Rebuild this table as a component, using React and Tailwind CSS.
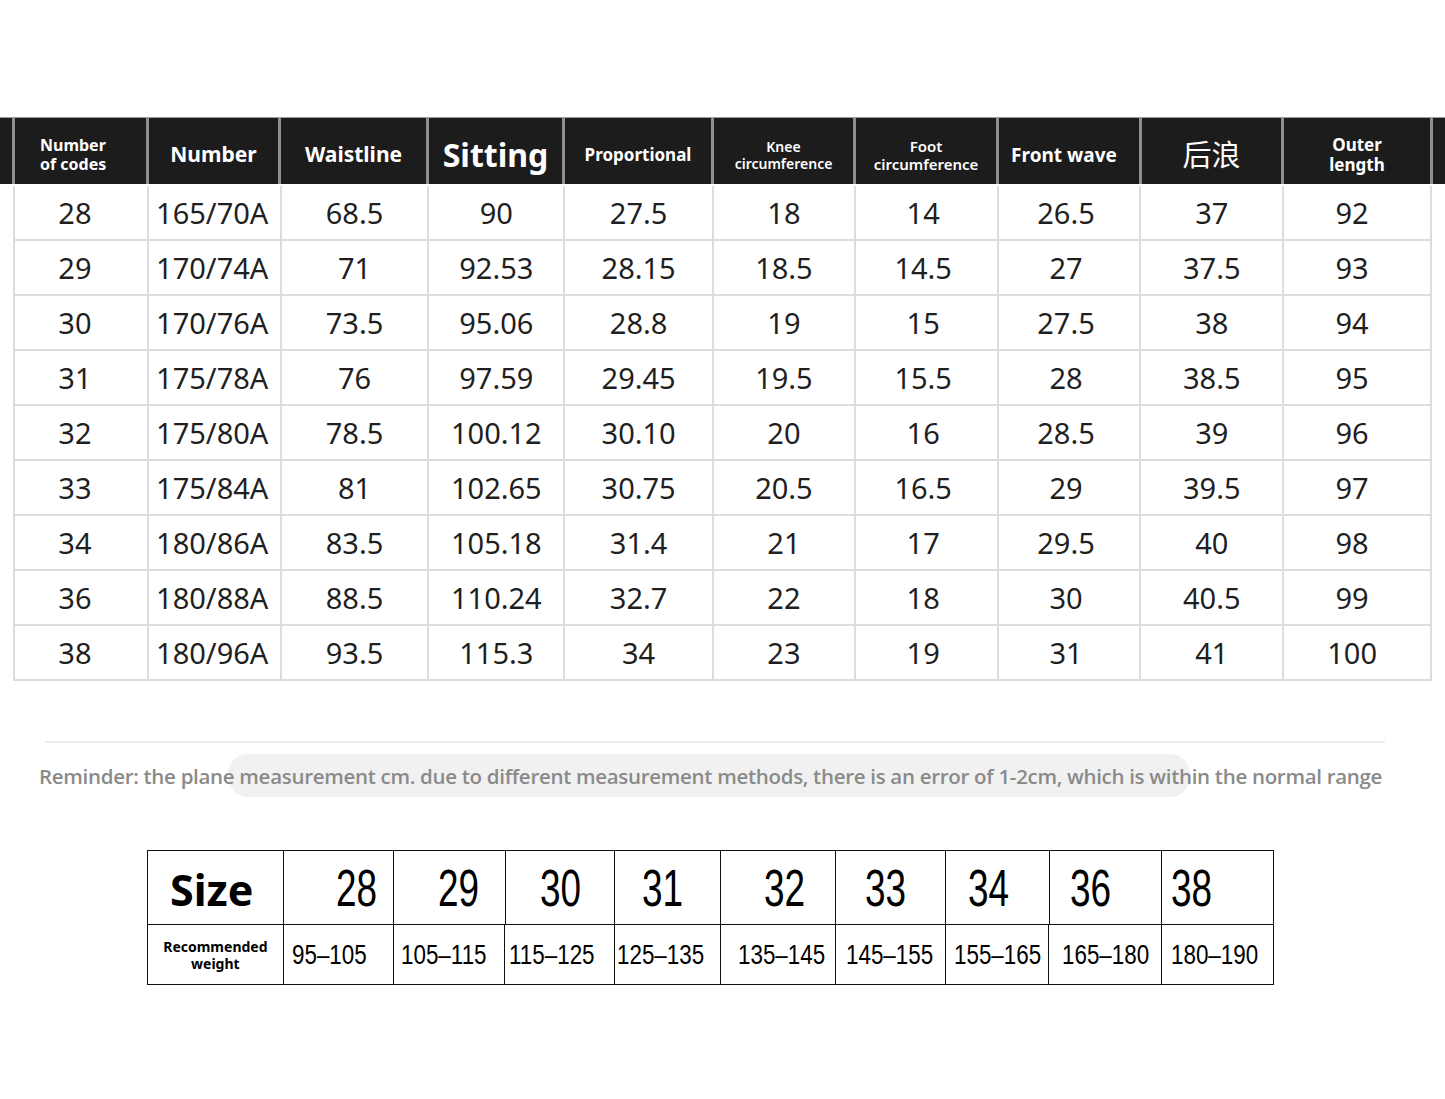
const HEADERS = [
  { w: "w-[131px]", label: ["Number", "of codes"], cls: "text-[16px] leading-[19px] items-start pl-[25px]" },
  { w: "w-[129px]", label: ["Number"], cls: "text-[21px]" },
  { w: "w-[145px]", label: ["Waistline"], cls: "text-[21px]" },
  { w: "w-[133px]", label: ["Sitting"], cls: "text-[32px] text-[#d2d2d2]" },
  { w: "w-[146px]", label: ["Proportional"], cls: "text-[17px]" },
  { w: "w-[139px]", label: ["Knee", "circumference"], cls: "text-[14px] leading-[17px] font-semibold" },
  { w: "w-[140px]", label: ["Foot", "circumference"], cls: "text-[15px] leading-[18px] font-semibold" },
  { w: "w-[140px]", label: ["Front wave"], cls: "text-[19px] pr-[10px]" },
  { w: "w-[139px]", label: ["后浪"], cls: "text-[29px] font-normal" },
  { w: "w-[146px]", label: ["Outer", "length"], cls: "text-[17px] leading-[20px]" },
];

const COL_WIDTHS = [
  "w-[134px] pr-[12px]",
  "w-[133px] pr-[4px]",
  "w-[148px]",
  "w-[136px]",
  "w-[149px]",
  "w-[142px]",
  "w-[143px] pr-[6px]",
  "w-[143px] pr-[6px]",
  "w-[143px]",
  "w-[148px] pr-[10px]",
];

const ROWS = [
  ["28", "165/70A", "68.5", "90", "27.5", "18", "14", "26.5", "37", "92"],
  ["29", "170/74A", "71", "92.53", "28.15", "18.5", "14.5", "27", "37.5", "93"],
  ["30", "170/76A", "73.5", "95.06", "28.8", "19", "15", "27.5", "38", "94"],
  ["31", "175/78A", "76", "97.59", "29.45", "19.5", "15.5", "28", "38.5", "95"],
  ["32", "175/80A", "78.5", "100.12", "30.10", "20", "16", "28.5", "39", "96"],
  ["33", "175/84A", "81", "102.65", "30.75", "20.5", "16.5", "29", "39.5", "97"],
  ["34", "180/86A", "83.5", "105.18", "31.4", "21", "17", "29.5", "40", "98"],
  ["36", "180/88A", "88.5", "110.24", "32.7", "22", "18", "30", "40.5", "99"],
  ["38", "180/96A", "93.5", "115.3", "34", "23", "19", "31", "41", "100"],
];

const SIZES = [
  { w: "w-[110px]", size: "28", weight: "95–105", sp: "pl-[52px]", wp: "pl-[8px]" },
  { w: "w-[112px]", size: "29", weight: "105–115", sp: "pl-[44px]", wp: "pl-[7px]" },
  { w: "w-[110px]", size: "30", weight: "115–125", sp: "pl-[34px]", wp: "pl-[4px]" },
  { w: "w-[106px]", size: "31", weight: "125–135", sp: "pl-[27px]", wp: "pl-[2px]" },
  { w: "w-[115px]", size: "32", weight: "135–145", sp: "pl-[43px]", wp: "pl-[17px]" },
  { w: "w-[110px]", size: "33", weight: "145–155", sp: "pl-[29px]", wp: "pl-[10px]" },
  { w: "w-[104px]", size: "34", weight: "155–165", sp: "pl-[22px]", wp: "pl-[8px]" },
  { w: "w-[113px]", size: "36", weight: "165–180", sp: "pl-[20px]", wp: "pl-[13px]" },
  { w: "w-[111px]", size: "38", weight: "180–190", sp: "pl-[9px]", wp: "pl-[9px]" },
];

export default function App() {
  return (
    <div className="w-[1445px] h-[1099px] bg-white pt-[117px] font-['Noto_Sans','Noto_Sans_CJK_SC',sans-serif] overflow-hidden">
      {/* measurement table */}
      <div className="flex h-[67px] gap-[3px] bg-[#8f8f8f] border-t border-[#9a9a9a]">
        <div className="w-[12px] bg-[#1c1c1c]" />
        {HEADERS.map((h, i) => (
          <div
            key={i}
            className={`${h.w} bg-[#1c1c1c] text-white font-bold flex flex-col justify-center items-center pt-[8px] ${h.cls}`}
          >
            {h.label.map((l) => (
              <span key={l} className="whitespace-nowrap">
                {l}
              </span>
            ))}
          </div>
        ))}
        <div className="w-[12px] bg-[#1c1c1c]" />
      </div>

      <div className="ml-[13px] mt-[2px] w-[1419px] border-l-2 border-[#dcdcdc]">
        {ROWS.map((row, r) => (
          <div key={r} className="flex h-[55px] border-b-2 border-[#dcdcdc]">
            {row.map((v, c) => (
              <div
                key={c}
                className={`${COL_WIDTHS[c]} border-r-2 border-[#dcdcdc] flex items-center justify-center text-[29px] text-[#1f1f1f]`}
              >
                {v}
              </div>
            ))}
          </div>
        ))}
      </div>

      {/* reminder */}
      <div className="mt-[60px] ml-[45px] w-[1340px] h-[2px] bg-[#ececec]" />
      <div className="relative mt-[11px] h-[44px] flex items-center">
        <div className="absolute left-[228px] top-0 w-[962px] h-[43px] rounded-[20px] bg-[#f1f1f1]" />
        <p className="relative pl-[39px] whitespace-nowrap text-[20.5px] font-semibold text-[#8a8a8a] font-['Open_Sans',sans-serif] tracking-[-0.3px]">
          Reminder: the plane measurement cm. due to different measurement methods, there is an error of 1-2cm, which
          is within the normal range
        </p>
      </div>

      {/* size table */}
      <div className="mt-[52px] ml-[147px] w-[1127px] border-[1.5px] border-[#111]">
        <div className="flex h-[74px] border-b-[1.5px] border-[#111]">
          <div className="w-[136px] border-r-[1.5px] border-[#111] flex items-center pl-[22px] pt-[6px] text-[43px] font-bold text-black">
            Size
          </div>
          {SIZES.map((s, i) => (
            <div
              key={s.size}
              className={`${s.w} ${i < SIZES.length - 1 ? "border-r-[1.5px] border-[#111]" : ""} flex items-center ${s.sp} text-black font-['Liberation_Sans',sans-serif]`}
            >
              <span className="inline-block origin-left scale-x-[0.71] text-[52px] leading-none">{s.size}</span>
            </div>
          ))}
        </div>
        <div className="flex h-[59px]">
          <div className="w-[136px] border-r-[1.5px] border-[#111] flex flex-col items-center justify-center text-[14px] leading-[17px] font-bold text-black">
            <span>Recommended</span>
            <span>weight</span>
          </div>
          {SIZES.map((s, i) => (
            <div
              key={s.size}
              className={`${s.w} ${i < SIZES.length - 1 ? "border-r-[1.5px] border-[#111]" : ""} flex items-center ${s.wp} text-black font-['Liberation_Sans',sans-serif] overflow-hidden`}
            >
              <span className="inline-block origin-left scale-x-[0.8] text-[28px] leading-none whitespace-nowrap">
                {s.weight}
              </span>
            </div>
          ))}
        </div>
      </div>
    </div>
  );
}
